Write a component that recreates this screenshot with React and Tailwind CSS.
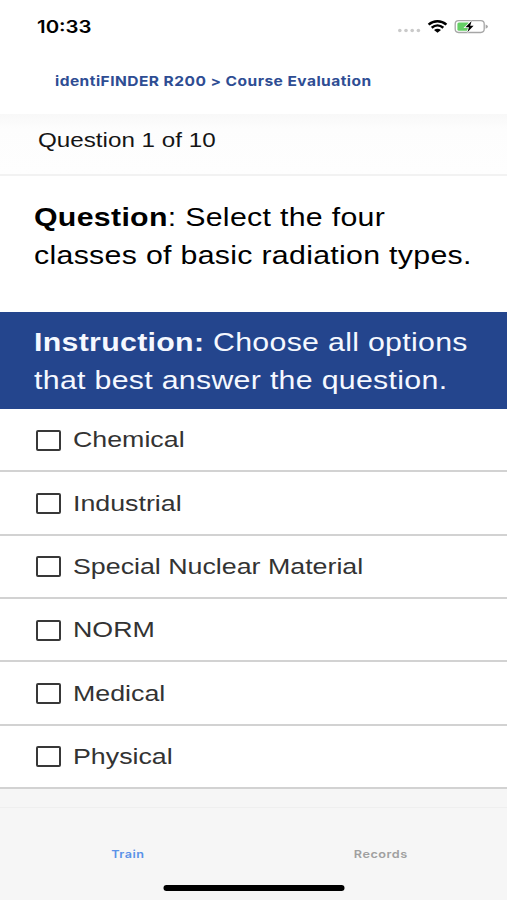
import React from "react";

const options = ["Chemical", "Industrial", "Special Nuclear Material", "NORM", "Medical", "Physical"];

function Wide({ className = "", children }) {
  return <span className={`block w-max origin-left whitespace-nowrap ${className}`}>{children}</span>;
}

function StatusIcons() {
  return (
    <svg width="92" height="18" viewBox="396 17 92 18" aria-hidden="true">
      <g fill="#cacaca">
        <circle cx="399.8" cy="29.5" r="1.8" />
        <circle cx="406" cy="29.5" r="1.8" />
        <circle cx="412.2" cy="29.5" r="1.8" />
        <circle cx="418.4" cy="29.5" r="1.8" />
      </g>
      <g fill="none" stroke="#000" strokeWidth="2.5">
        <path d="M428.6 23.6C433.8 19 441.2 19 446.4 23.6" />
        <path d="M431.7 26.8C435.2 23.8 439.8 23.8 443.3 26.8" />
      </g>
      <path d="M434 29Q437.5 26.4 441 29L437.5 31.8Z" fill="#000" />
      <rect x="455.2" y="19.7" width="29" height="11.8" rx="3.4" fill="#fff" stroke="#a6a6a6" strokeWidth="1.3" />
      <path d="M485.6 23.4Q488 24.2 488 25.6T485.6 27.8Z" fill="#a6a6a6" />
      <rect x="457.4" y="21.4" width="12" height="8.4" rx="1.5" fill="#65cf65" />
      <path d="M471.6 20L465.4 26.3H469L467.4 31.2L473.6 24.8H470.2Z" fill="#000" stroke="#fff" strokeWidth="1.6" paintOrder="stroke" />
    </svg>
  );
}

export default function App() {
  return (
    <div className="flex h-[900px] w-[507px] flex-col overflow-hidden bg-white font-['Liberation_Sans',Arial,sans-serif] text-black">
      <header className="flex h-[114px] shrink-0 flex-col">
        <div className="flex h-[53px] items-center justify-between pr-[19px] pl-[37px]">
          <Wide className="scale-x-[1.2] pt-[2px] font-['Inter',sans-serif] text-[17px] font-semibold">10:33</Wide>
          <StatusIcons />
        </div>
        <div className="flex h-[57px] items-center pl-[55px] font-['Inter',sans-serif] text-[13.5px] font-bold tracking-[0.4px] text-[#2e4d93]">
          <Wide className="scale-x-[1.15]">identiFINDER R200 &gt; Course Evaluation</Wide>
        </div>
      </header>

      <div className="flex h-[62px] shrink-0 items-center border-b-2 border-[#f2f2f2] bg-linear-to-b from-[#f8f8f8] via-[#fdfdfd] via-25% to-[#fefefe] pb-[8px] pl-[37.5px] text-[20px] text-[#151515]">
        <Wide className="scale-x-[1.21]">Question 1 of 10</Wide>
      </div>

      <section className="h-[136px] shrink-0 pt-[22px] pl-[33.5px] text-[25px] leading-[38px] tracking-[0.25px]">
        <Wide className="scale-x-[1.212]"><b>Question</b>: Select the four</Wide>
        <Wide className="scale-x-[1.212]">classes of basic radiation types.</Wide>
      </section>

      <section className="h-[97px] shrink-0 bg-[#24458d] pt-[11px] pl-[33.5px] text-[25px] leading-[38px] tracking-[0.25px] text-[#f5f8ff]">
        <Wide className="scale-x-[1.212]"><b>Instruction:</b> Choose all options</Wide>
        <Wide className="scale-x-[1.212]">that best answer the question.</Wide>
      </section>

      <ul className="grid h-[380px] shrink-0 grid-rows-6">
        {options.map((name) => (
          <li key={name} className="flex items-center gap-[12px] border-b-2 border-[#d2d2d2] pt-px pl-[36px] text-[22.5px] text-[#333]">
            <span className="h-[21px] w-[25px] rounded-[2px] border-2 border-[#383838]" />
            <Wide className="scale-x-[1.19]">{name}</Wide>
          </li>
        ))}
      </ul>

      <nav className="flex grow flex-col bg-[#f6f6f6] pt-[18px]">
        <div className="grid h-[78px] shrink-0 grid-cols-2 border-t border-[#efefef] pt-[39px] font-['Inter',sans-serif] text-[11px] leading-[14px] font-semibold tracking-[0.45px]">
          <span className="origin-center scale-x-[1.15] pl-[2px] text-center text-[#5a92e8]">Train</span>
          <span className="origin-center scale-x-[1.15] text-center text-[#a0a0a0]">Records</span>
        </div>
        <div className="mx-auto h-[6px] w-[181px] shrink-0 translate-x-[0.5px] rounded-full bg-black" />
      </nav>
    </div>
  );
}
